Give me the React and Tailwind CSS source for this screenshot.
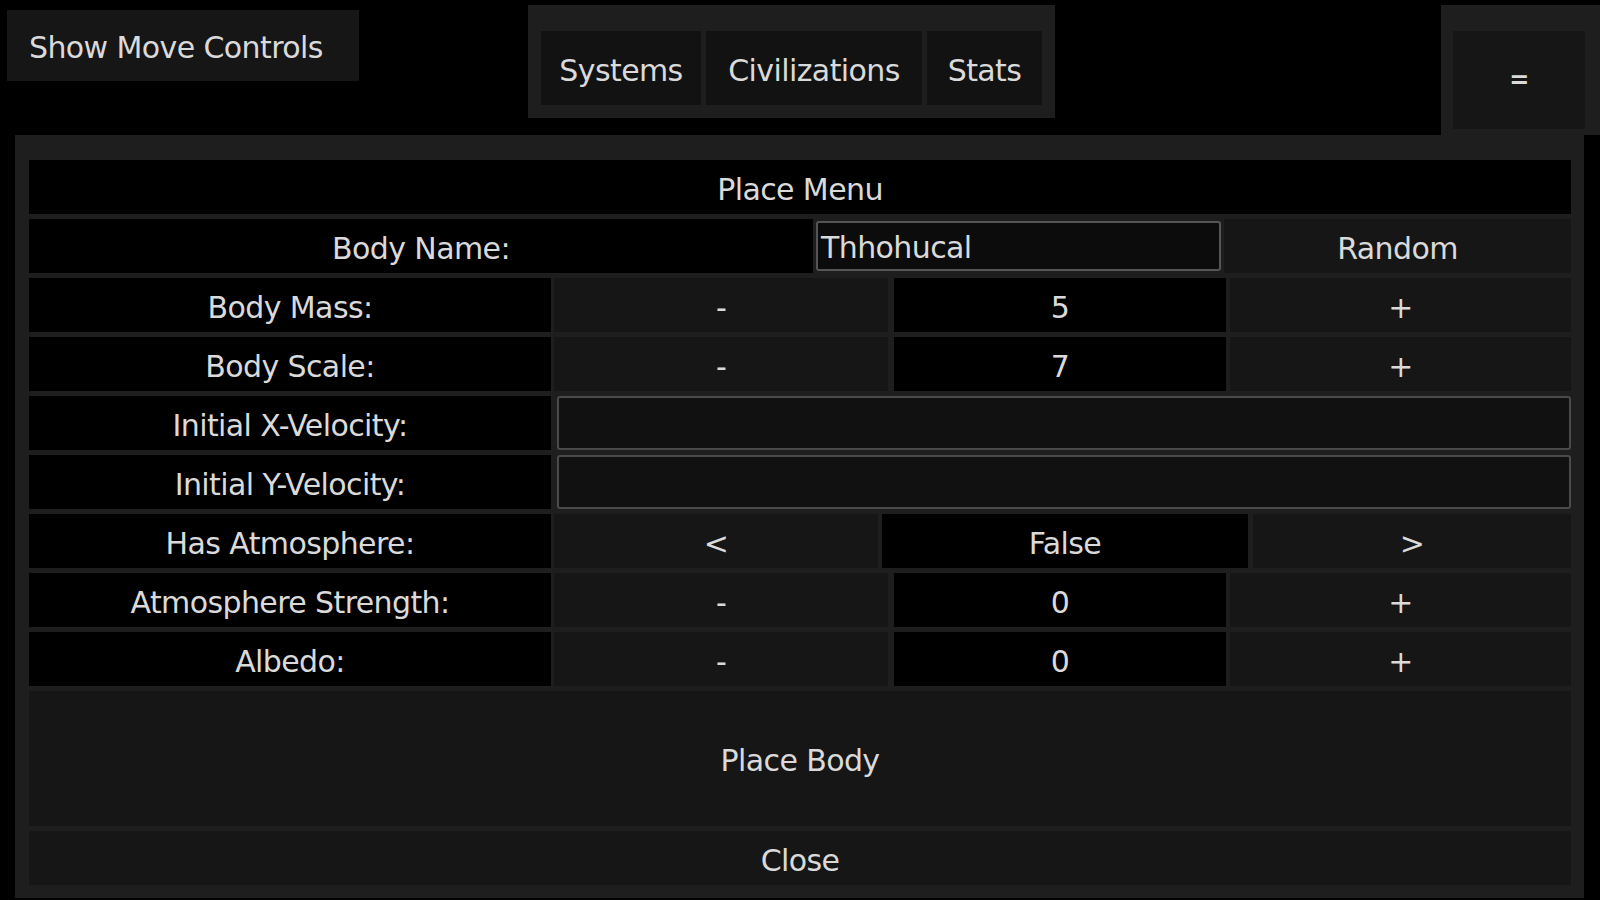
const font = { fontFamily: "'DejaVu Sans', Lato, sans-serif" };

function Cell({ w, tone = "btn", children, className = "" }) {
  const bg = tone === "dark" ? "bg-black" : "bg-[#161616]";
  return (
    <div className={`${w} ${bg} flex h-full items-center justify-center pt-[4px] ${className}`}>
      {children}
    </div>
  );
}

function Row({ children }) {
  return <div className="flex h-[54px] items-stretch">{children}</div>;
}

function Stepper({ label, value }) {
  return (
    <Row>
      <Cell w="w-[522px]" tone="dark">{label}</Cell>
      <Cell w="w-[334px] ml-[3px]">-</Cell>
      <Cell w="w-[332px] ml-[6px]" tone="dark">{value}</Cell>
      <Cell w="w-[341px] ml-[4px]">+</Cell>
    </Row>
  );
}

function VelocityRow({ label }) {
  return (
    <Row>
      <Cell w="w-[522px]" tone="dark">{label}</Cell>
      <div className="ml-[6px] flex-1 rounded-[3px] border-2 border-[#4a4a4a] bg-[#111111]" />
    </Row>
  );
}

export default function App() {
  return (
    <div className="h-[900px] w-[1600px] overflow-hidden bg-black text-[30px] tracking-[-0.6px] text-[#dadada]" style={font}>
      <div className="flex h-[135px] items-start">
        <div className="ml-[7px] mt-[10px] flex h-[71px] w-[352px] items-center bg-[#161616] pl-[22px] pt-[4px]">
          Show Move Controls
        </div>
        <div className="ml-[169px] mt-[5px] flex h-[113px] w-[527px] items-start gap-[5px] bg-[#1e1e1e] px-[13px] pt-[26px]">
          <div className="flex h-[74px] w-[160px] items-center justify-center bg-[#121212] pt-[4px]">Systems</div>
          <div className="flex h-[74px] w-[216px] items-center justify-center bg-[#121212] pt-[4px]">Civilizations</div>
          <div className="flex h-[74px] w-[115px] items-center justify-center bg-[#121212] pt-[4px]">Stats</div>
        </div>
        <div className="ml-auto mt-[5px] h-[130px] w-[159px] bg-[#1e1e1e] pl-[12px] pr-[15px] pt-[26px]">
          <div className="flex h-[98px] items-center justify-center bg-[#161616] text-[24px] font-bold">=</div>
        </div>
      </div>

      <div className="ml-[15px] flex h-[763px] w-[1569px] flex-col gap-[5px] bg-[#1e1e1e] pl-[14px] pr-[13px] pt-[25px]">
        <div className="flex h-[54px] items-center justify-center bg-black pt-[4px]">Place Menu</div>
        <Row>
          <Cell w="w-[784px]" tone="dark">Body Name:</Cell>
          <div className="ml-[3px] mt-[2px] flex h-[50px] w-[405px] items-center rounded-[3px] border-2 border-[#555555] bg-[#0c0c0c] pl-[3px] pt-[2px]">
            Thhohucal
          </div>
          <Cell w="w-[347px] ml-[3px]">Random</Cell>
        </Row>
        <Stepper label="Body Mass:" value="5" />
        <Stepper label="Body Scale:" value="7" />
        <VelocityRow label="Initial X-Velocity:" />
        <VelocityRow label="Initial Y-Velocity:" />
        <Row>
          <Cell w="w-[522px]" tone="dark">Has Atmosphere:</Cell>
          <Cell w="w-[324px] ml-[3px]">&lt;</Cell>
          <Cell w="w-[366px] ml-[4px]" tone="dark">False</Cell>
          <Cell w="w-[318px] ml-[5px]">&gt;</Cell>
        </Row>
        <Stepper label="Atmosphere Strength:" value="0" />
        <Stepper label="Albedo:" value="0" />
        <div className="flex h-[135px] items-center justify-center bg-[#161616] pt-[4px]">Place Body</div>
        <div className="flex h-[54px] items-center justify-center bg-[#161616] pt-[4px]">Close</div>
      </div>
    </div>
  );
}
